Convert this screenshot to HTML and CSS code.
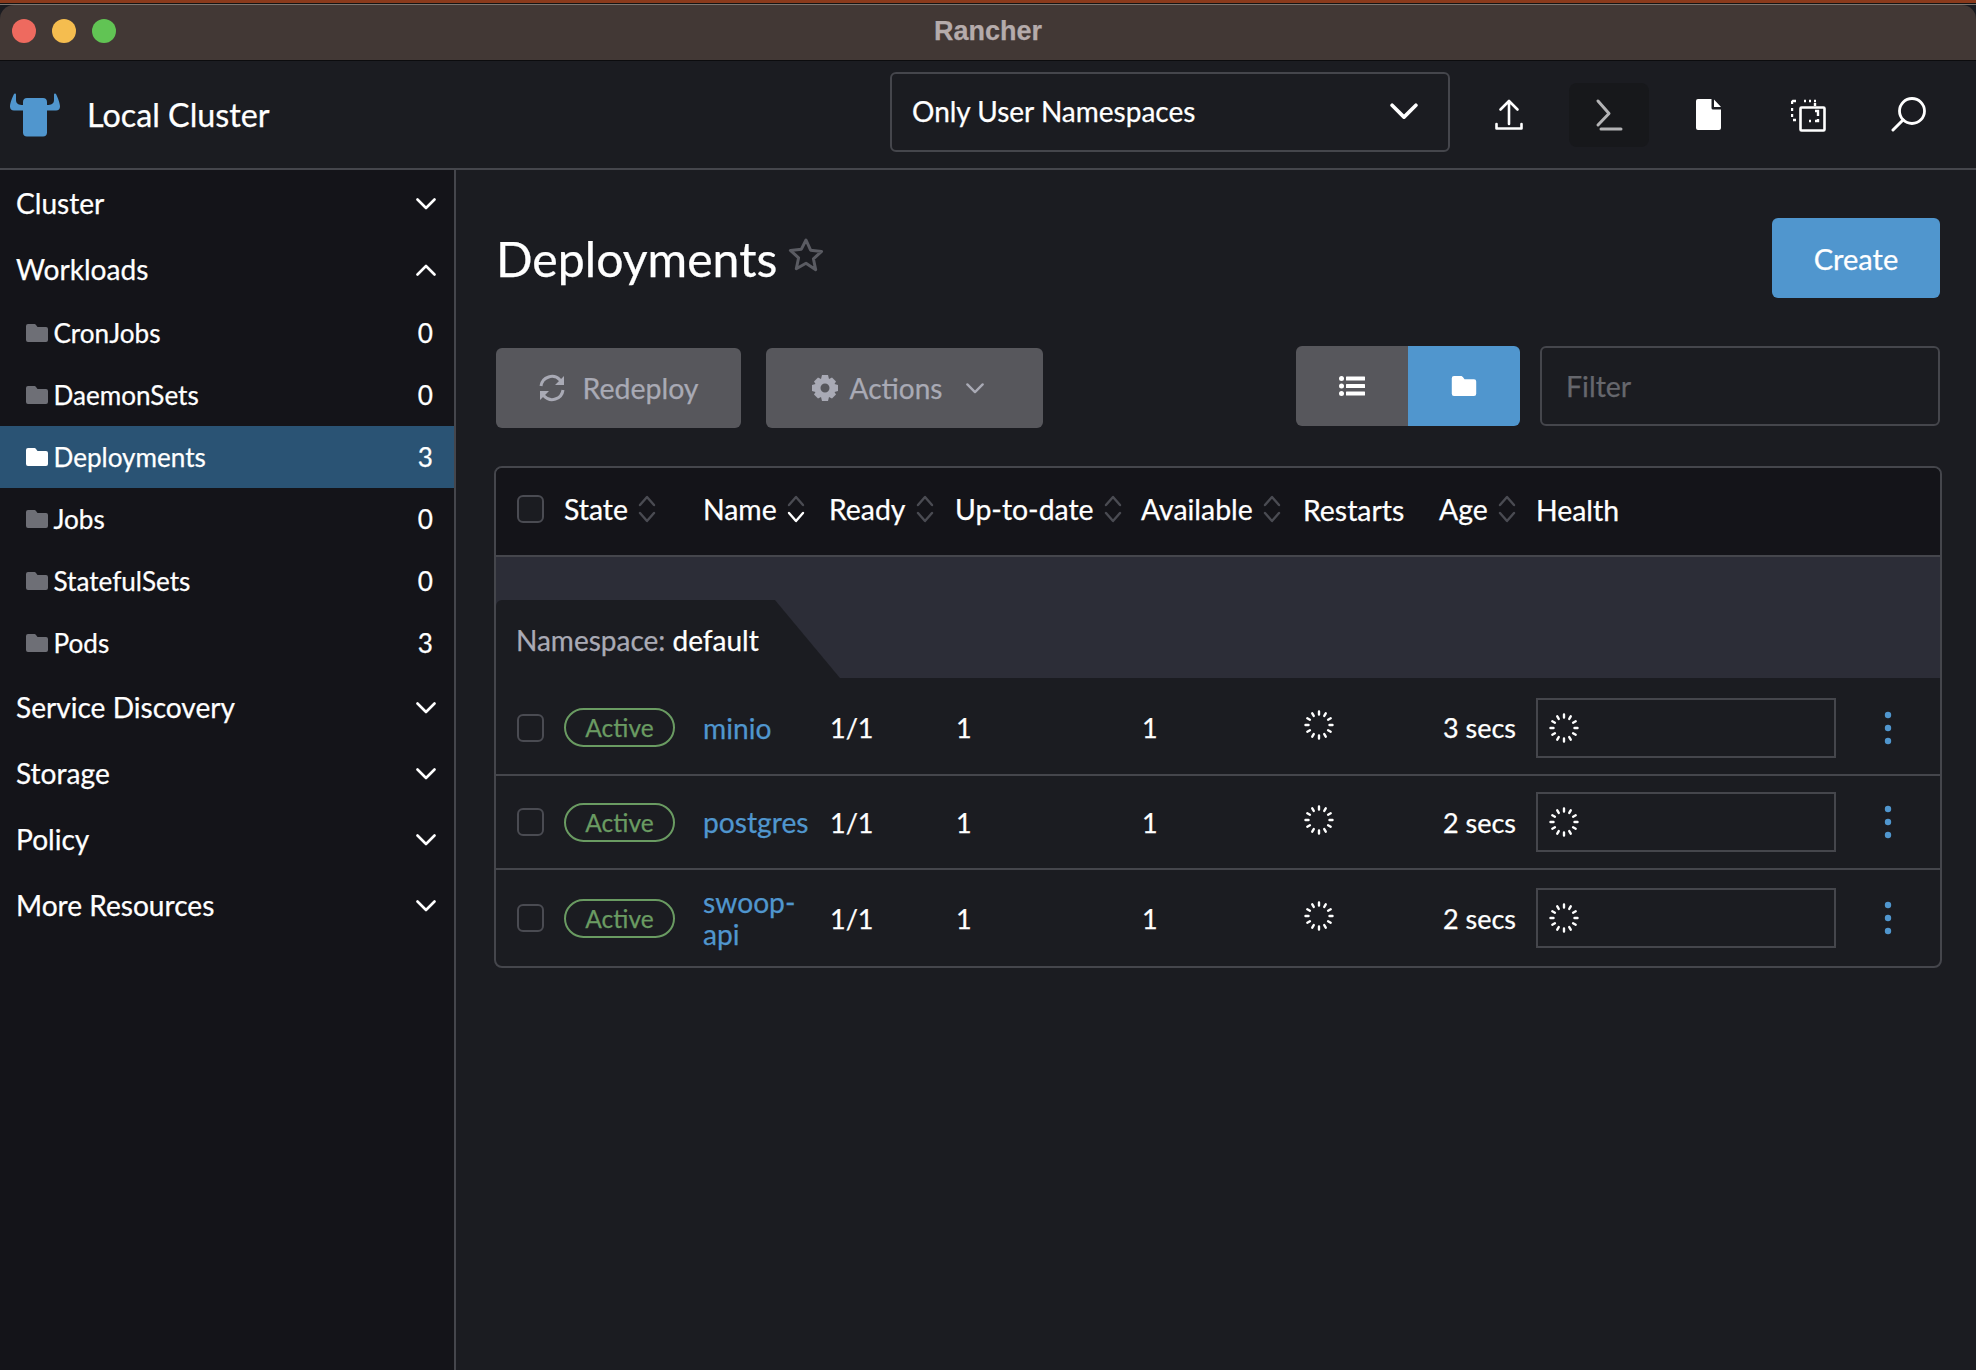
FILE: index.html
```html
<!DOCTYPE html>
<html lang="en">
<head>
<meta charset="utf-8">
<title>Rancher</title>
<link rel="stylesheet" href="styles.css">
</head>
<body>
<svg class="defs" width="0" height="0" aria-hidden="true">
  <defs>
    <symbol id="folder" viewBox="0 0 22 18"><path d="M2 0h6c1 0 1.500.4 2 1l1.500 2H20a2 2 0 0 1 2 2v11a2 2 0 0 1-2 2H2a2 2 0 0 1-2-2V2a2 2 0 0 1 2-2z"/></symbol>
    <symbol id="spin" viewBox="0 0 30 30"><g fill="none" stroke="currentColor" stroke-width="2.400" stroke-linecap="round"><path d="M15 1.500v3M15 25.500v3M1.500 15h3M25.500 15h3M20.250 5.910L21.750 3.310M9.750 5.910L8.250 3.310M20.250 24.090L21.750 26.690M9.750 24.090L8.250 26.690M24.090 9.750L26.690 8.250M5.910 9.750L3.310 8.250M24.090 20.250L26.690 21.750M5.910 20.250L3.310 21.750"/></g></symbol>
    <symbol id="sort" viewBox="0 0 18 28"><path d="M2 10l7-8 7 8M2 18l7 8 7-8" fill="none" stroke="#4a4b52" stroke-width="2.400" stroke-linecap="round" stroke-linejoin="round"/></symbol>
    <symbol id="sortd" viewBox="0 0 18 28"><path d="M2 10l7-8 7 8" fill="none" stroke="#4a4b52" stroke-width="2.400" stroke-linecap="round" stroke-linejoin="round"/><path d="M2 18l7 8 7-8" fill="none" stroke="#fff" stroke-width="2.400" stroke-linecap="round" stroke-linejoin="round"/></symbol>
    <symbol id="chev" viewBox="0 0 20 12"><path d="M1.500 1.500L10 10l8.500-8.500" fill="none" stroke="currentColor" stroke-width="2.600" stroke-linecap="round" stroke-linejoin="round"/></symbol>
    <symbol id="dots" viewBox="0 0 8 34"><circle cx="4" cy="4" r="3.200"/><circle cx="4" cy="17" r="3.200"/><circle cx="4" cy="30" r="3.200"/></symbol>
  </defs>
</svg>

<div class="strip"></div>
<div class="titlebar">
  <span class="light red"></span><span class="light yellow"></span><span class="light green"></span>
  <span class="wintitle">Rancher</span>
</div>

<header class="header">
  <div class="brand">
    <svg class="logo" viewBox="0 0 50 44"><path fill="#5096ce" d="M17 5h16c2.500 0 4 1.500 4 4v3c4 0 7-1 7-5V1.500c0-1.200 1.500-1.500 2-.5 1.500 3 4 9 4 12.500 0 2.500-1.500 4-4 4H37v22c0 2.500-1.500 4-4 4H17c-2.500 0-4-1.500-4-4V17.500H4c-2.500 0-4-1.500-4-4C0 10 2.500 4 4 1c.5-1 2-.7 2 .5V7c0 4 3 5 7 5V9c0-2.500 1.500-4 4-4z"/></svg>
    <span class="cluster">Local Cluster</span>
  </div>
  <div class="ns-select">
    <span>Only User Namespaces</span>
    <svg class="ns-chev"><use href="#chev"/></svg>
  </div>
  <div class="tools">
    <svg class="tool" viewBox="0 0 36 36"><path d="M18 5v22M9.500 12.500L18 4l8.500 8.500M5.500 27v4.500h25V27" fill="none" stroke="#fff" stroke-width="2.600" stroke-linecap="round" stroke-linejoin="round"/></svg>
    <span class="term"><svg class="tool" viewBox="0 0 36 36"><path d="M7 4l11 12.500L7 28M10 32h20" fill="none" stroke="#b3b3b5" stroke-width="3" stroke-linecap="round" stroke-linejoin="round"/></svg></span>
    <svg class="tool" viewBox="0 0 36 36"><path fill="#fff" d="M7 2h13.500v9a1.500 1.500 0 0 0 1.500 1.500h8V31a2 2 0 0 1-2 2H7a2 2 0 0 1-2-2V4a2 2 0 0 1 2-2zM23 2.500l7 7.500h-7z"/></svg>
    <svg class="tool" viewBox="0 0 36 36"><path d="M13 4h2M18 4h2M23 4h2M1 7v-2l1-1h3M1 11v3M1 17v3M2 23h3M24 6v3" fill="none" stroke="#fff" stroke-width="2.400"/><rect x="9.500" y="10.500" width="24" height="23" rx="1" fill="none" stroke="#fff" stroke-width="2.600"/><path d="M24 14h3v5M27 22v2h-3M18 24h2" fill="none" stroke="#fff" stroke-width="2.400"/></svg>
    <svg class="tool" viewBox="0 0 36 36"><circle cx="21" cy="14" r="12.500" fill="none" stroke="#fff" stroke-width="2.800"/><path d="M12 23L2 33" fill="none" stroke="#fff" stroke-width="3" stroke-linecap="round"/></svg>
  </div>
</header>

<div class="body">
  <nav class="side">
    <div class="group"><span>Cluster</span><svg class="gchev"><use href="#chev"/></svg></div>
    <div class="group"><span>Workloads</span><svg class="gchev up"><use href="#chev"/></svg></div>
    <a class="item"><svg class="fold"><use href="#folder"/></svg><span class="iname">CronJobs</span><span>0</span></a>
    <a class="item"><svg class="fold"><use href="#folder"/></svg><span class="iname">DaemonSets</span><span>0</span></a>
    <a class="item active"><svg class="fold"><use href="#folder"/></svg><span class="iname">Deployments</span><span>3</span></a>
    <a class="item"><svg class="fold"><use href="#folder"/></svg><span class="iname">Jobs</span><span>0</span></a>
    <a class="item"><svg class="fold"><use href="#folder"/></svg><span class="iname">StatefulSets</span><span>0</span></a>
    <a class="item"><svg class="fold"><use href="#folder"/></svg><span class="iname">Pods</span><span>3</span></a>
    <div class="group"><span>Service Discovery</span><svg class="gchev"><use href="#chev"/></svg></div>
    <div class="group"><span>Storage</span><svg class="gchev"><use href="#chev"/></svg></div>
    <div class="group"><span>Policy</span><svg class="gchev"><use href="#chev"/></svg></div>
    <div class="group"><span>More Resources</span><svg class="gchev"><use href="#chev"/></svg></div>
  </nav>

  <main class="main">
    <div class="titlerow">
      <h1>Deployments</h1>
      <svg class="star" viewBox="0 0 36 36"><path d="M18 3l4.600 10.200 11 1.200-8.200 7.400 2.300 10.900L18 26.200 8.300 31.700l2.300-10.900-8.200-7.400 11-1.200z" fill="none" stroke="#5a5b62" stroke-width="3" stroke-linejoin="round"/></svg>
      <button class="btn primary">Create</button>
    </div>

    <div class="toolbar">
      <button class="btn muted redeploy">
        <svg class="bicon" viewBox="0 0 28 28"><path d="M3 12a11 11 0 0 1 19-6l3 3M25 16a11 11 0 0 1-19 6l-3-3" fill="none" stroke="#a9aab5" stroke-width="3"/><path d="M26 2v9h-9zM2 26v-9h9z" fill="#a9aab5"/></svg>
        Redeploy
      </button>
      <button class="btn muted actions">
        <svg class="bicon" viewBox="0 0 28 28"><path fill="#a9aab5" fill-rule="evenodd" d="M11 1h6l1 4 3-1.500 4 4L23.500 10l3.500 1v6l-3.500 1 1.500 2.500-4 4L18 23l-1 4h-6l-1-4-3 1.500-4-4L4.500 18 1 17v-6l3.500-1L3 7.500l4-4L10 5zM14 9.500a4.500 4.500 0 1 0 0 9 4.500 4.500 0 0 0 0-9z"/></svg>
        Actions
        <svg class="achev"><use href="#chev"/></svg>
      </button>
      <div class="toggle">
        <span class="tg off"><svg viewBox="0 0 26 20" class="tgi"><g fill="#fff"><circle cx="2.500" cy="2.500" r="2.500"/><circle cx="2.500" cy="10" r="2.500"/><circle cx="2.500" cy="17.500" r="2.500"/><rect x="7" y="0.500" width="19" height="4" rx=".5"/><rect x="7" y="8" width="19" height="4" rx=".5"/><rect x="7" y="15.500" width="19" height="4" rx=".5"/></g></svg></span>
        <span class="tg on"><svg class="tgi"><use href="#folder" fill="#fff"/></svg></span>
      </div>
      <div class="filter">Filter</div>
    </div>

    <section class="table">
      <div class="row head">
        <div class="cell"><span class="check"></span></div>
        <div class="cell">State<svg class="sort"><use href="#sort"/></svg></div>
        <div class="cell">Name<svg class="sort"><use href="#sortd"/></svg></div>
        <div class="cell">Ready<svg class="sort"><use href="#sort"/></svg></div>
        <div class="cell">Up-to-date<svg class="sort"><use href="#sort"/></svg></div>
        <div class="cell">Available<svg class="sort"><use href="#sort"/></svg></div>
        <div class="cell nudge">Restarts</div>
        <div class="cell">Age<svg class="sort"><use href="#sort"/></svg></div>
        <div class="cell nudge">Health</div>
      </div>
      <div class="band">
        <div class="tab"><span class="nslabel">Namespace:</span> default</div>
        <div class="slant"></div>
      </div>

      <div class="row data first">
        <div class="cell"><span class="check"></span></div>
        <div class="cell"><span class="badge">Active</span></div>
        <div class="cell"><a class="link">minio</a></div>
        <div class="cell num">1/1</div>
        <div class="cell num">1</div>
        <div class="cell num">1</div>
        <div class="cell"><svg class="spin lift"><use href="#spin"/></svg></div>
        <div class="cell age">3 secs</div>
        <div class="cell"><div class="health"><svg class="spin"><use href="#spin"/></svg></div></div>
        <div class="cell kebab"><svg class="dots"><use href="#dots"/></svg></div>
      </div>
      <div class="row data">
        <div class="cell"><span class="check"></span></div>
        <div class="cell"><span class="badge">Active</span></div>
        <div class="cell"><a class="link">postgres</a></div>
        <div class="cell num">1/1</div>
        <div class="cell num">1</div>
        <div class="cell num">1</div>
        <div class="cell"><svg class="spin lift"><use href="#spin"/></svg></div>
        <div class="cell age">2 secs</div>
        <div class="cell"><div class="health"><svg class="spin"><use href="#spin"/></svg></div></div>
        <div class="cell kebab"><svg class="dots"><use href="#dots"/></svg></div>
      </div>
      <div class="row data last">
        <div class="cell"><span class="check"></span></div>
        <div class="cell"><span class="badge">Active</span></div>
        <div class="cell"><a class="link">swoop-<br>api</a></div>
        <div class="cell num">1/1</div>
        <div class="cell num">1</div>
        <div class="cell num">1</div>
        <div class="cell"><svg class="spin lift"><use href="#spin"/></svg></div>
        <div class="cell age">2 secs</div>
        <div class="cell"><div class="health"><svg class="spin"><use href="#spin"/></svg></div></div>
        <div class="cell kebab"><svg class="dots"><use href="#dots"/></svg></div>
      </div>
    </section>
  </main>
</div>
</body>
</html>
```
FILE: styles.css
```css
* { box-sizing: border-box; }
html, body { margin: 0; height: 100%; }
body {
  width: 1976px;
  height: 1370px;
  overflow: hidden;
  display: flex;
  flex-direction: column;
  background: #1b1c21;
  color: #fff;
  font-family: Lato, "Liberation Sans", sans-serif;
  -webkit-text-stroke: 0.25px;
}
.defs { position: absolute; }

.strip {
  height: 5px;
  flex: none;
  background: linear-gradient(to bottom, #8a3a1c 0 3px, #141414 3px 4px, #7d7671 4px 5px);
}
.titlebar {
  height: 56px;
  flex: none;
  position: relative;
  display: flex;
  align-items: center;
  gap: 16px;
  padding: 0 0 3px 12px;
  background: #423835;
  border-bottom: 1px solid #0c0c0e;
  border-radius: 14px 14px 0 0;
}
.light { width: 24px; height: 24px; border-radius: 50%; }
.red { background: #ee6a5f; }
.yellow { background: #f5bd4f; }
.green { background: #61c454; }
.wintitle {
  position: absolute;
  left: 0;
  right: 0;
  top: 11px;
  text-align: center;
  font: 700 27px "Liberation Sans", sans-serif;
  color: #b5abab;
}

.header {
  height: 109px;
  flex: none;
  display: flex;
  align-items: center;
  padding-bottom: 5px;
  background: #1b1c21;
  border-bottom: 2px solid #45464c;
}
.brand { width: 890px; display: flex; align-items: center; padding: 5px 0 0 10px; }
.logo { width: 50px; height: 44px; margin-right: 27px; }
.cluster { font-size: 32.300px; }
.ns-select {
  width: 560px;
  height: 80px;
  flex: none;
  display: flex;
  align-items: center;
  justify-content: space-between;
  padding: 0 30px 2px 20px;
  border: 2px solid #45464c;
  border-radius: 6px;
  font-size: 28px;
}
.ns-chev { width: 28px; height: 17px; }
.tools { flex: 1; display: flex; align-items: center; padding: 5px 0 0 41px; }
.tool { width: 36px; height: 36px; flex: none; }
.tools > .tool:nth-child(1) { margin: 0 42px 0 0; }
.term {
  width: 80px;
  height: 64px;
  display: flex;
  align-items: center;
  justify-content: center;
  background: #17181b;
  border-radius: 8px;
  margin-right: 42px;
}
.tools > .tool:nth-child(3) { margin-right: 64px; }
.tools > .tool:nth-child(4) { margin-right: 64px; }

.body { flex: 1; display: flex; min-height: 0; }
.side {
  width: 456px;
  flex: none;
  background: #141419;
  border-right: 2px solid #45464c;
}
.group {
  height: 66px;
  display: flex;
  align-items: center;
  justify-content: space-between;
  padding: 0 18px 0 16px;
  font-size: 28.100px;
}
.gchev { width: 20px; height: 12px; margin-top: 2px; }
.up { transform: rotate(180deg); }
.item {
  height: 62px;
  display: flex;
  align-items: center;
  padding: 0 21px 0 26px;
  font-size: 26.100px;
}
.item .fold { width: 22px; height: 18px; fill: #6e6f76; margin-right: 5.500px; }
.iname { flex: 1; }
.active { background: #2a5374; }
.active .fold { fill: #fff; }

.main { flex: 1; padding: 0 36px 0 39px; min-width: 0; }
.titlerow { height: 178px; display: flex; align-items: flex-start; padding-top: 48px; }
h1 { margin: 12px 0 0 1px; font-size: 48.200px; font-weight: 400; line-height: 56px; }
.star { width: 36px; height: 36px; margin: 19px 0 0 11px; }
.btn {
  height: 80px;
  border: 0;
  border-radius: 6px;
  font: 400 28.500px Lato, sans-serif;
  display: flex;
  align-items: center;
  justify-content: center;
}
.primary { width: 168px; margin-left: auto; background: #5096ce; color: #fff; font-size: 29px; }
.muted { background: #57575c; color: #a9aab5; }
.toolbar { height: 118px; display: flex; align-items: flex-start; padding-left: 1px; }
.redeploy { width: 245px; gap: 16px; }
.actions { width: 277px; margin-left: 25px; gap: 11px; padding: 0 14px 0 0; font-size: 28px; }
.bicon { width: 28px; height: 28px; }
.achev { width: 18px; height: 11px; margin-left: 13px; color: #a9aab5; }
.toggle {
  display: flex;
  height: 80px;
  margin: -2px 0 0 253px;
  border-radius: 6px;
  overflow: hidden;
}
.tg { width: 112px; display: flex; align-items: center; justify-content: center; }
.off { background: #57575c; }
.on { background: #5096ce; }
.tgi { width: 26px; height: 20px; }
.filter {
  width: 400px;
  height: 80px;
  margin: -2px 0 0 20px;
  display: flex;
  align-items: center;
  padding-left: 24px;
  border: 2px solid #45464c;
  border-radius: 6px;
  font-size: 28.500px;
  color: #66676d;
}

.table {
  margin-left: -1px;
  width: 1448px;
  border: 2px solid #45464c;
  border-radius: 8px;
  overflow: hidden;
}
.row {
  display: grid;
  grid-template-columns: 68px 139px 126px 126px 186px 162px 136px 97px 334px 1fr;
  font-size: 27px;
}
.cell { display: flex; align-items: center; min-width: 0; }
.head {
  height: 89px;
  padding-bottom: 5px;
  font-size: 28.400px;
  background: #141419;
  border-bottom: 2px solid #45464c;
}
.nudge { padding-top: 1px; }
.sort { width: 18px; height: 28px; margin-left: 10.500px; }
.check {
  width: 27px;
  height: 28px;
  margin-left: 21px;
  border: 2px solid #4a4b52;
  border-radius: 6px;
  background: #1b1c21;
}
.band { height: 121px; background: #2c2d37; display: flex; align-items: flex-end; }
.tab {
  width: 279px;
  height: 78px;
  flex: none;
  padding: 23px 0 0 20px;
  background: #1b1c21;
  border-top-left-radius: 6px;
  font-size: 28px;
  white-space: nowrap;
}
.nslabel { color: #a9aab5; }
.slant {
  width: 65px;
  height: 78px;
  background: linear-gradient(to top right, #1b1c21 0 49.500%, transparent 50.500%);
}
.data { height: 94px; border-bottom: 2px solid #45464c; }
.first { height: 98px; padding-top: 3px; }
.last { height: 96px; border-bottom: 0; }
.badge {
  width: 111px;
  height: 39px;
  display: flex;
  align-items: center;
  justify-content: center;
  border: 2px solid #6a9b62;
  border-radius: 20px;
  font-size: 24.500px;
  color: #6a9b62;
}
.link { color: #5096ce; line-height: 32px; font-size: 28.200px; }
.num { padding-left: 1px; }
.spin { width: 30px; height: 30px; color: #fff; }
.lift { margin: -5px 0 0 1px; }
.age { justify-content: flex-end; padding-right: 20px; }
.health {
  width: 300px;
  height: 60px;
  display: flex;
  align-items: center;
  padding-left: 11px;
  border: 2px solid #45464c;
}
.kebab { padding-left: 14px; }
.dots { width: 8px; height: 34px; fill: #5096ce; }
```
